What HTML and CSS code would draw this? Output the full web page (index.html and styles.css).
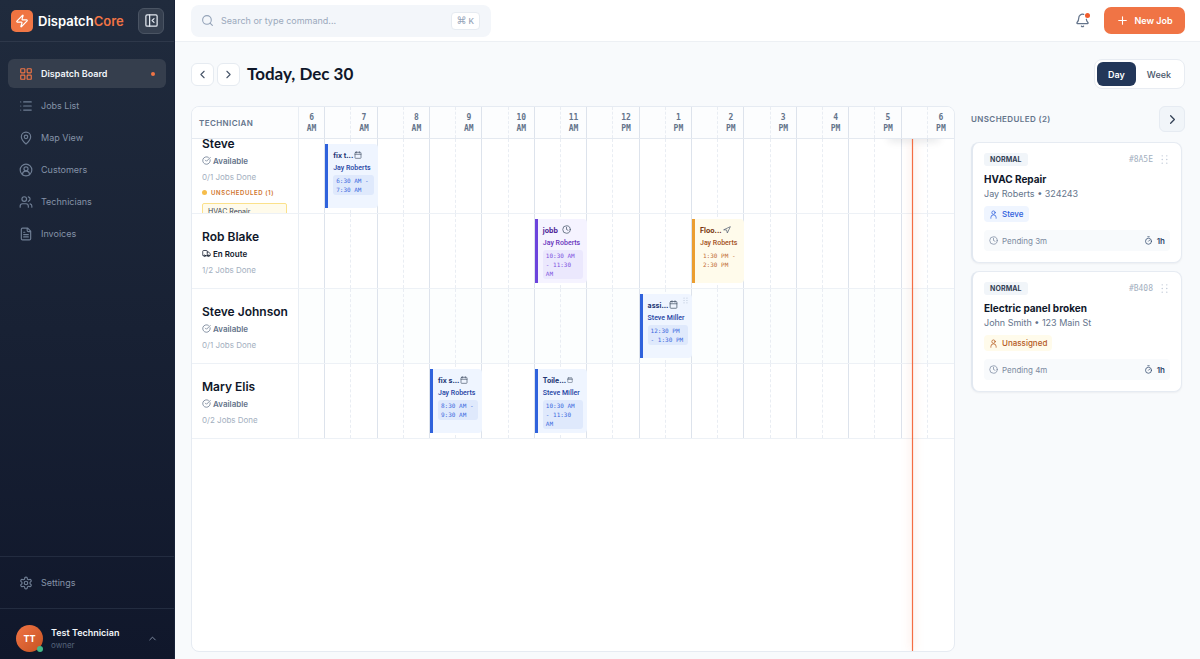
FILE: index.html
```html
<!DOCTYPE html>
<html lang="en">
<head>
<meta charset="utf-8">
<title>DispatchCore</title>
<link rel="stylesheet" href="styles.css">
</head>
<body>
<svg class="sprite" aria-hidden="true">
  <symbol id="bolt" viewBox="0 0 24 24"><path d="M4 14a1 1 0 0 1-.78-1.63l9.9-10.2a.5.5 0 0 1 .86.46l-1.92 6.02A1 1 0 0 0 13 10h7a1 1 0 0 1 .78 1.63l-9.9 10.2a.5.5 0 0 1-.86-.46l1.92-6.02A1 1 0 0 0 11 14z"/></symbol>
  <symbol id="panel" viewBox="0 0 24 24"><rect x="3" y="3" width="18" height="18" rx="2"/><path d="M9 3v18M16 15l-3-3 3-3"/></symbol>
  <symbol id="grid" viewBox="0 0 24 24"><rect x="3" y="3" width="7" height="7" rx="1"/><rect x="14" y="3" width="7" height="7" rx="1"/><rect x="14" y="14" width="7" height="7" rx="1"/><rect x="3" y="14" width="7" height="7" rx="1"/></symbol>
  <symbol id="list" viewBox="0 0 24 24"><path d="M3 5h.01M3 12h.01M3 19h.01M8 5h13M8 12h13M8 19h13"/></symbol>
  <symbol id="pin" viewBox="0 0 24 24"><path d="M20 10c0 5-5.5 10.2-7.4 11.8a1 1 0 0 1-1.2 0C9.500 20.200 4 15 4 10a8 8 0 0 1 16 0"/><circle cx="12" cy="10" r="3"/></symbol>
  <symbol id="user-circle" viewBox="0 0 24 24"><circle cx="12" cy="12" r="10"/><circle cx="12" cy="10" r="3.500"/><path d="M6 20a6 6 0 0 1 12 0"/></symbol>
  <symbol id="users" viewBox="0 0 24 24"><path d="M16 21v-2a4 4 0 0 0-4-4H6a4 4 0 0 0-4 4v2M22 21v-2a4 4 0 0 0-3-3.870M16 3.130a4 4 0 0 1 0 7.750"/><circle cx="9" cy="7" r="4"/></symbol>
  <symbol id="file" viewBox="0 0 24 24"><path d="M15 2H6a2 2 0 0 0-2 2v16a2 2 0 0 0 2 2h12a2 2 0 0 0 2-2V7zM14 2v4a2 2 0 0 0 2 2h4M10 9H8M16 13H8M16 17H8"/></symbol>
  <symbol id="gear" viewBox="0 0 24 24"><path d="M12.220 2h-.44a2 2 0 0 0-2 2v.18a2 2 0 0 1-1 1.730l-.43.25a2 2 0 0 1-2 0l-.15-.08a2 2 0 0 0-2.730.73l-.22.38a2 2 0 0 0 .73 2.730l.15.1a2 2 0 0 1 1 1.720v.51a2 2 0 0 1-1 1.740l-.15.09a2 2 0 0 0-.73 2.730l.22.38a2 2 0 0 0 2.730.73l.15-.08a2 2 0 0 1 2 0l.43.25a2 2 0 0 1 1 1.730V20a2 2 0 0 0 2 2h.44a2 2 0 0 0 2-2v-.18a2 2 0 0 1 1-1.730l.43-.25a2 2 0 0 1 2 0l.15.08a2 2 0 0 0 2.730-.73l.22-.39a2 2 0 0 0-.73-2.730l-.15-.08a2 2 0 0 1-1-1.740v-.5a2 2 0 0 1 1-1.740l.15-.09a2 2 0 0 0 .73-2.730l-.22-.38a2 2 0 0 0-2.730-.73l-.15.08a2 2 0 0 1-2 0l-.43-.25a2 2 0 0 1-1-1.730V4a2 2 0 0 0-2-2z"/><circle cx="12" cy="12" r="3"/></symbol>
  <symbol id="up" viewBox="0 0 24 24"><path d="m18 15-6-6-6 6"/></symbol>
  <symbol id="left" viewBox="0 0 24 24"><path d="m15 18-6-6 6-6"/></symbol>
  <symbol id="right" viewBox="0 0 24 24"><path d="m9 18 6-6-6-6"/></symbol>
  <symbol id="search" viewBox="0 0 24 24"><circle cx="11" cy="11" r="8"/><path d="m21 21-4.300-4.300"/></symbol>
  <symbol id="bell" viewBox="0 0 24 24"><path d="M10.300 21a2 2 0 0 0 3.400 0M13.900 2.300A6 6 0 0 0 6 8c0 4.500-1.400 6-2.700 7.300A1 1 0 0 0 4 17h16a1 1 0 0 0 .74-1.700C19.700 14.200 18.500 13 18.150 10"/></symbol>
  <symbol id="plus" viewBox="0 0 24 24"><path d="M5 12h14M12 5v14"/></symbol>
  <symbol id="check" viewBox="0 0 24 24"><path d="M21.800 10A10 10 0 1 1 17 3.340M9 11l3 3L22 4"/></symbol>
  <symbol id="truck" viewBox="0 0 24 24"><path d="M14 18V6a2 2 0 0 0-2-2H4a2 2 0 0 0-2 2v11a1 1 0 0 0 1 1h2M15 18H9M19 18h2a1 1 0 0 0 1-1v-3.650a1 1 0 0 0-.22-.62l-3.480-4.350A1 1 0 0 0 17.520 8H14"/><circle cx="17" cy="18" r="2"/><circle cx="7" cy="18" r="2"/></symbol>
  <symbol id="calendar" viewBox="0 0 24 24"><path d="M8 2v4M16 2v4M3 10h18"/><rect x="3" y="4" width="18" height="18" rx="2"/></symbol>
  <symbol id="clock" viewBox="0 0 24 24"><circle cx="12" cy="12" r="10"/><path d="M12 6v6l4 2"/></symbol>
  <symbol id="nav" viewBox="0 0 24 24"><path d="m3 11 19-9-9 19-2-8z"/></symbol>
  <symbol id="person" viewBox="0 0 24 24"><circle cx="12" cy="7" r="4.500"/><path d="M5 22v-2a7 7 0 0 1 14 0v2"/></symbol>
  <symbol id="timer" viewBox="0 0 24 24"><path d="M10 2h4M12 14l3-3"/><circle cx="12" cy="14" r="8"/></symbol>
  <symbol id="grip" viewBox="0 0 24 24"><path d="M7 4h.01M7 12h.01M7 20h.01M17 4h.01M17 12h.01M17 20h.01"/></symbol>
</svg>
<div class="app">
  <aside class="sidebar">
    <div class="brand">
      <span class="logo"><svg class="icon"><use href="#bolt"/></svg></span>
      <span class="brand-name">Dispatch<span class="accent">Core</span></span>
      <button class="toggle" aria-label="Collapse sidebar"><svg class="icon"><use href="#panel"/></svg></button>
    </div>
    <nav class="menu">
      <a class="link active" href="#"><svg class="icon"><use href="#grid"/></svg><span>Dispatch Board</span><i class="dot"></i></a>
      <a class="link" href="#"><svg class="icon"><use href="#list"/></svg><span>Jobs List</span></a>
      <a class="link" href="#"><svg class="icon"><use href="#pin"/></svg><span>Map View</span></a>
      <a class="link" href="#"><svg class="icon"><use href="#user-circle"/></svg><span>Customers</span></a>
      <a class="link" href="#"><svg class="icon"><use href="#users"/></svg><span>Technicians</span></a>
      <a class="link" href="#"><svg class="icon"><use href="#file"/></svg><span>Invoices</span></a>
    </nav>
    <div class="settings"><a class="link" href="#"><svg class="icon"><use href="#gear"/></svg><span>Settings</span></a></div>
    <button class="account">
      <span class="avatar">TT<i class="online"></i></span>
      <span class="who"><span class="who-name">Test Technician</span><span class="who-role">owner</span></span>
      <svg class="icon small"><use href="#up"/></svg>
    </button>
  </aside>

  <div class="page">
    <header class="topbar">
      <label class="search"><svg class="icon"><use href="#search"/></svg><input type="text" aria-label="Search" placeholder="Search or type command..."><kbd><span class="cmd">⌘</span>K</kbd></label>
      <div class="actions">
        <button class="bell" aria-label="Notifications"><svg class="icon"><use href="#bell"/></svg><i class="alert"></i></button>
        <button class="new-job"><svg class="icon"><use href="#plus"/></svg>New Job</button>
      </div>
    </header>

    <main class="content">
      <div class="heading">
        <button class="step" aria-label="Previous day"><svg class="icon"><use href="#left"/></svg></button>
        <button class="step" aria-label="Next day"><svg class="icon"><use href="#right"/></svg></button>
        <h1>Today, Dec 30</h1>
        <div class="switch"><button class="mode on">Day</button><button class="mode">Week</button></div>
      </div>

      <div class="columns">
        <section class="board">
          <div class="board-head">
            <div class="tech-title">TECHNICIAN</div>
            <div class="lane hours" id="hours"></div>
          </div>
          <div class="board-body">
            <div class="row">
              <div class="tech"><h2>Steve</h2><p class="status"><svg class="icon tiny"><use href="#check"/></svg>Available</p><p class="done">0/1 Jobs Done</p><p class="pending"><i class="amber"></i>UNSCHEDULED (1)</p><p class="mini">HVAC Repair</p></div>
              <div class="lane"><article class="job blue at-0630"><h3>fix t...<svg class="icon mark"><use href="#calendar"/></svg></h3><p>Jay Roberts</p><time>6:30 AM - 7:30 AM</time></article></div>
            </div>
            <div class="row">
              <div class="tech"><h2>Rob Blake</h2><p class="status route"><svg class="icon tiny"><use href="#truck"/></svg>En Route</p><p class="done">1/2 Jobs Done</p></div>
              <div class="lane"><article class="job purple at-1030"><h3>jobb<svg class="icon mark large spaced"><use href="#clock"/></svg></h3><p>Jay Roberts</p><time>10:30 AM - 11:30 AM</time></article><article class="job yellow at-1330"><h3>Floo...<svg class="icon mark"><use href="#nav"/></svg></h3><p>Jay Roberts</p><time>1:30 PM - 2:30 PM</time></article></div>
            </div>
            <div class="row tint">
              <div class="tech"><h2>Steve Johnson</h2><p class="status"><svg class="icon tiny"><use href="#check"/></svg>Available</p><p class="done">0/1 Jobs Done</p></div>
              <div class="lane"><article class="job blue at-1230"><h3>assi...<svg class="icon mark large"><use href="#calendar"/></svg></h3><p>Steve Miller</p><time>12:30 PM - 1:30 PM</time><svg class="icon handle"><use href="#grip"/></svg></article></div>
            </div>
            <div class="row">
              <div class="tech"><h2>Mary Elis</h2><p class="status"><svg class="icon tiny"><use href="#check"/></svg>Available</p><p class="done">0/2 Jobs Done</p></div>
              <div class="lane"><article class="job blue at-0830"><h3>fix s...<svg class="icon mark"><use href="#calendar"/></svg></h3><p>Jay Roberts</p><time>8:30 AM - 9:30 AM</time></article><article class="job blue at-1030"><h3>Toile...<svg class="icon mark little"><use href="#calendar"/></svg></h3><p>Steve Miller</p><time>10:30 AM - 11:30 AM</time></article></div>
            </div>
            <div class="now-track"><i class="now"></i></div>
          </div>
        </section>

        <aside class="queue">
          <div class="queue-head"><h2>UNSCHEDULED (2)</h2><button class="collapse" aria-label="Collapse queue"><svg class="icon"><use href="#right"/></svg></button></div>
          <article class="card">
            <div class="card-top"><span class="tag">NORMAL</span><span class="ref">#8A5E</span><svg class="icon grip"><use href="#grip"/></svg></div>
            <h3>HVAC Repair</h3>
            <p>Jay Roberts • 324243</p>
            <span class="assignee"><svg class="icon tiny"><use href="#person"/></svg>Steve</span>
            <div class="card-foot"><svg class="icon tiny"><use href="#clock"/></svg><span>Pending 3m</span><strong><svg class="icon tiny"><use href="#timer"/></svg>1h</strong></div>
          </article>
          <article class="card">
            <div class="card-top"><span class="tag">NORMAL</span><span class="ref">#B408</span><svg class="icon grip"><use href="#grip"/></svg></div>
            <h3>Electric panel broken</h3>
            <p>John Smith • 123 Main St</p>
            <span class="assignee none"><svg class="icon tiny"><use href="#person"/></svg>Unassigned</span>
            <div class="card-foot"><svg class="icon tiny"><use href="#clock"/></svg><span>Pending 4m</span><strong><svg class="icon tiny"><use href="#timer"/></svg>1h</strong></div>
          </article>
        </aside>
      </div>
    </main>
  </div>
</div>
<script src="board.js"></script>
</body>
</html>
```
FILE: board.js
```js
// Half-hour slots from 6:00 AM to 6:30 PM; the first half of each hour carries the label.
const SLOTS = 25;
document.querySelectorAll('.lane').forEach((lane) => {
  for (let i = SLOTS - 1; i >= 0; i--) {
    const slot = document.createElement('div');
    slot.className = i % 2 ? 'slot half' : 'slot';
    slot.style.gridColumn = i + 1;
    if (lane.id === 'hours' && i % 2 === 0) {
      const hour = 6 + i / 2;
      slot.innerHTML = `<span>${hour > 12 ? hour - 12 : hour}</span><span>${hour < 12 ? 'AM' : 'PM'}</span>`;
    }
    lane.prepend(slot);
  }
});
```
FILE: styles.css
```css
* { box-sizing: border-box; }
body { margin: 0; font-family: "Inter", "Liberation Sans", sans-serif; font-size: 9px; color: #0f172a; background: #f8fafc; }
h1, h2, h3, p { margin: 0; }
button { border: 0; padding: 0; font: inherit; color: inherit; background: none; display: flex; align-items: center; justify-content: center; }
a { color: inherit; text-decoration: none; }
.sprite { display: none; }
.icon { width: 13px; height: 13px; flex: none; fill: none; stroke: currentColor; stroke-width: 2; stroke-linecap: round; stroke-linejoin: round; }
.icon.small { width: 11px; height: 11px; }
.icon.tiny { width: 9px; height: 9px; }

.app { display: flex; height: 100vh; }
.sidebar { width: 175px; flex: none; display: flex; flex-direction: column; color: #8593a8; background: linear-gradient(#202b3d, #182134 50%, #10172b); border-right: 1px solid #182238; }
.brand { height: 42px; display: flex; align-items: center; gap: 5px; padding: 0 10px 0 11px; border-bottom: 1px solid #2e384a; }
.logo { width: 22px; height: 22px; border-radius: 5px; display: flex; align-items: center; justify-content: center; color: #fff; background: linear-gradient(135deg, #f0733f, #f07848); }
.logo .icon { width: 14px; height: 14px; }
.brand-name { font-size: 13px; font-weight: 600; color: #fff; }
.accent { color: #f07445; }
.toggle { width: 26px; height: 26px; margin-left: auto; color: #e2e8f0; background: #353f4f; border: 1px solid #4a5463; border-radius: 6px; }
.toggle .icon { width: 15px; height: 15px; }
.menu { flex: 1; display: flex; flex-direction: column; gap: 3px; padding: 17px 8px; }
.link { height: 29px; display: flex; align-items: center; gap: 8px; padding: 0 11px; border-radius: 6px; }
.link .icon { width: 14px; height: 14px; color: #6f7e94; }
.link.active { color: #f1f5f9; font-weight: 600; background: #353e4d; }
.link.active .icon { color: #f07445; }
.dot { width: 4px; height: 4px; margin-left: auto; border-radius: 50%; background: #f07445; }
.settings { padding: 11px 8px; border-top: 1px solid #232c40; }
.account { height: 51px; padding: 9px 16px 0; border-top: 1px solid #232c40; gap: 8px; text-align: left; }
.avatar { position: relative; width: 27px; height: 27px; border-radius: 50%; display: flex; align-items: center; justify-content: center; color: #fff; font-weight: 700; background: linear-gradient(135deg, #f07445, #c65322); }
.online { position: absolute; right: 0; bottom: 0; width: 6px; height: 6px; border-radius: 50%; background: #45b889; }
.who { flex: 1; display: flex; flex-direction: column; }
.who-name { color: #f1f5f9; font-weight: 600; line-height: 12px; }
.who-role { color: #56637a; font-size: 8px; line-height: 12px; }

.page { flex: 1; min-width: 0; display: flex; flex-direction: column; }
.topbar { height: 42px; flex: none; display: flex; align-items: center; justify-content: space-between; padding: 0 15px 0 16px; background: #fff; border-bottom: 1px solid #edf0f4; }
.search { width: 300px; height: 32px; display: flex; align-items: center; gap: 7px; padding: 0 11px 0 10px; border-radius: 8px; color: #94a3b8; background: #f3f6fa; }
.search input { flex: 1; min-width: 0; border: 0; padding: 0; outline: 0; background: none; font: inherit; color: #0f172a; }
.search input::placeholder { color: #9ba9bc; opacity: 1; }
kbd { height: 18px; padding: 0 5px; display: flex; align-items: center; gap: 2px; font: 500 8px "Inter", sans-serif; background: #fff; border: 1px solid #e6ebf1; border-radius: 4px; }
.cmd { font: 10px "DejaVu Sans", sans-serif; }
.actions { display: flex; align-items: center; gap: 14px; }
.bell { position: relative; color: #64748b; }
.bell .icon { width: 15px; height: 15px; }
.alert { position: absolute; right: 0; top: 0; width: 5px; height: 5px; border-radius: 50%; background: #f05b2c; }
.new-job { width: 81px; height: 27px; gap: 5px; border-radius: 7px; color: #fff; font-weight: 600; background: #f07445; }

.content { flex: 1; min-height: 0; display: flex; flex-direction: column; gap: 17px; padding: 17px 15px 7px 16px; }
.heading { height: 30px; display: flex; align-items: center; gap: 3px; }
.step { width: 23px; height: 23px; color: #475569; background: #fff; border: 1px solid #e6ebf1; border-radius: 6px; }
h1 { margin-left: 4px; padding-bottom: 2px; font-family: "Lato", "Inter", sans-serif; font-size: 17px; font-weight: 700; }
.switch { margin-left: auto; display: flex; padding: 2px; background: #fff; border: 1px solid #e8ecf2; border-radius: 8px; }
.mode { height: 24px; padding: 0 11px; font-weight: 500; color: #475569; border-radius: 6px; }
.mode.on { color: #fff; background: #233759; font-weight: 600; }

.columns { flex: 1; min-height: 0; display: flex; gap: 16px; }
.board { flex: 1; min-width: 0; display: flex; flex-direction: column; overflow: hidden; background: #fff; border: 1px solid #e6ebf2; border-radius: 8px; }
.board-head, .row { display: grid; grid-template-columns: 107px 1fr; grid-template-rows: 100%; border-bottom: 1px solid #edf1f6; }
.board-head { height: 32px; flex: none; background: #fcfdfe; color: #64748b; border-color: #e4e9f0; }
.tech-title { display: flex; align-items: center; padding-left: 7px; font-size: 8px; font-weight: 600; letter-spacing: 0.4px; border-right: 1px solid #e9eef4; }
.lane { display: grid; grid-template-columns: repeat(25, minmax(0, 1fr)); grid-template-rows: 100%; min-width: 0; }
.slot { grid-row: 1; border-right: 1px solid #dde3ec; }
.slot.half { border-right: 1px dashed #e9edf3; }
.slot:nth-child(25) { border-right: 0; }
.hours .slot { display: flex; flex-direction: column; align-items: center; justify-content: center; font: 700 8px/11px "DejaVu Sans Mono", monospace; }
.board-body { position: relative; flex: 1; }
.row { height: 75px; }
.row.tint .lane { background: #fcfefe; }
.tech { min-width: 0; min-height: 0; display: flex; flex-direction: column; justify-content: center; padding: 2px 11px 0 10px; border-right: 1px solid #e9eef4; clip-path: inset(-6px 0 0 0); }
.tech h2 { font-size: 12px; line-height: 17px; font-weight: 600; white-space: nowrap; }
.status { display: flex; align-items: center; gap: 2px; font-size: 8px; line-height: 18px; font-weight: 600; color: #64748b; }
.status.route { color: #0f172a; }
.done { font-size: 8px; line-height: 14px; color: #a3afc0; }
.pending { display: flex; align-items: center; gap: 4px; line-height: 17px; font-size: 6px; font-weight: 600; letter-spacing: 0.6px; color: #d0742c; }
.amber { width: 5px; height: 5px; border-radius: 50%; background: #f6bd4b; }
.mini { flex: none; margin-top: 2px; padding: 0 5px; font-size: 7px; line-height: 15px; color: #334155; background: #fffbeb; border: 1px solid #fbe18b; border-radius: 2px; }
.job { position: relative; grid-row: 1; min-width: 0; margin: 5px 0; padding: 6px 4px 0 5px; border-left: 3px solid; border-radius: 0 4px 4px 0; overflow: hidden; }
.job h3 { display: flex; height: 12px; align-items: center; font-size: 7px; font-weight: 700; line-height: 12px; white-space: nowrap; }
.job p { font-family: "Roboto", sans-serif; font-size: 7px; line-height: 12px; font-weight: 500; white-space: nowrap; }
.job time { display: block; padding: 1px 3px; margin-top: 1px; font: 6px/9px "DejaVu Sans Mono", monospace; border-radius: 3px; }
.mark { width: 8px; height: 8px; margin: 0 0 3px 1px; color: #475569; }
.mark.large { width: 9px; height: 9px; }
.mark.little { width: 6px; height: 6px; }
.mark.spaced { margin-left: 4px; }
.icon.handle { position: absolute; right: 3px; top: 3px; width: 7px; height: 7px; stroke-width: 3; color: #a9b8cc; }
.blue { color: #2443a3; background: #eff5ff; border-color: #2f62dc; }
.blue h3 { color: #223574; }
.blue time { color: #3d69de; background: #dfe9fc; }
.purple { color: #6835bd; background: #f5f3ff; border-color: #6c43dc; }
.purple h3 { color: #4c1d95; }
.purple time { color: #8053df; background: #ebe8fd; }
.yellow { color: #a3511c; background: #fffbeb; border-color: #eb9d30; }
.yellow h3 { color: #78350f; }
.yellow time { color: #c26b35; }
.at-0630 { grid-column: 2 / span 2; }
.at-0830 { grid-column: 6 / span 2; }
.at-1030 { grid-column: 10 / span 2; }
.at-1230 { grid-column: 14 / span 2; }
.at-1330 { grid-column: 16 / span 2; }
.now-track { position: absolute; inset: 0 0 0 107px; overflow: hidden; pointer-events: none; }
.now-track::before { content: ""; position: absolute; left: 90%; top: -8px; width: 50px; height: 8px; box-shadow: 0 2px 8px rgba(15, 23, 42, 0.12); }
.now { position: absolute; left: 93.6%; top: 0; bottom: 0; width: 1px; background: #f46d43; box-shadow: 0 0 1px #f46d43, 0 0 10px rgba(244, 109, 67, 0.6); }

.queue { width: 214px; flex: none; display: flex; flex-direction: column; gap: 8px; }
.queue-head { display: flex; align-items: center; justify-content: space-between; margin-bottom: 2px; color: #64748b; }
.queue-head h2 { font-size: 8px; font-weight: 600; letter-spacing: 0.4px; }
.collapse { width: 26px; height: 26px; color: #334155; background: #f1f5f9; border: 1px solid #e6ebf2; border-radius: 6px; }
.collapse .icon { width: 15px; height: 15px; }
.card { margin-right: 3px; padding: 10px 11px 11px; background: #fff; border: 1px solid #e6ebf2; border-left: 2px solid #e2e8f0; border-radius: 8px; box-shadow: 0 1px 2px rgba(15, 23, 42, 0.05); }
.card-top { display: flex; align-items: center; height: 13px; }
.tag { padding: 0 6px; font-size: 7px; line-height: 13px; font-weight: 700; letter-spacing: 0.1px; color: #334155; background: #f1f5f9; border-radius: 3px; }
.ref { margin-left: auto; font: 8px "DejaVu Sans Mono", monospace; color: #a3afc0; }
.icon.grip { width: 11px; height: 11px; margin-left: 6px; stroke-width: 3; color: #bcc6d4; }
.card h3 { margin-top: 5px; font-size: 10px; line-height: 16px; font-weight: 700; }
.card p { font-size: 9px; line-height: 14px; color: #64748b; }
.assignee { display: inline-flex; align-items: center; gap: 4px; height: 16px; margin-top: 5px; padding: 0 5px; font-size: 8px; font-weight: 500; color: #2f5fdc; background: #eff5ff; border-radius: 4px; }
.assignee.none { color: #b45a1e; background: #fffbeb; }
.card-foot { display: flex; align-items: center; gap: 4px; height: 21px; margin-top: 8px; padding: 0 5px; font-size: 8px; color: #7c8aa0; background: #f8fafc; border-radius: 4px; }
.card-foot strong { margin-left: auto; display: flex; align-items: center; gap: 4px; color: #334b6d; font-weight: 600; }
```
